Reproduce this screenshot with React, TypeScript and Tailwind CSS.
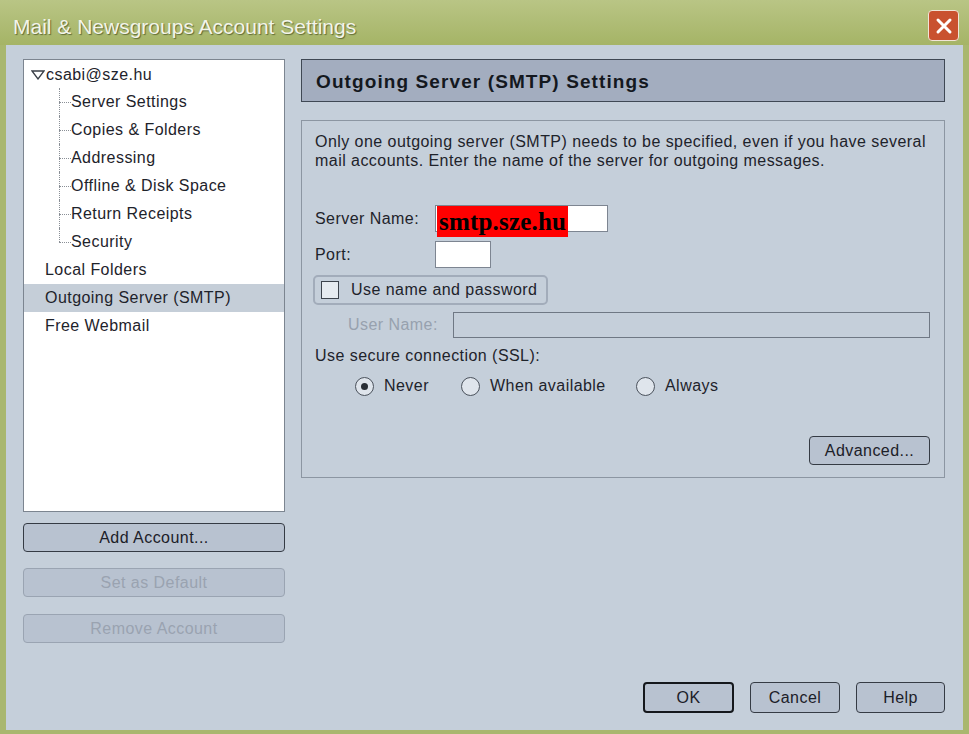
import React from 'react';

const ui = { fontFamily: '"Liberation Sans", Arial, sans-serif' };

const treeChildren = [
  'Server Settings',
  'Copies & Folders',
  'Addressing',
  'Offline & Disk Space',
  'Return Receipts',
  'Security',
];

function TreeChild({ label, last }: { label: string; last: boolean }) {
  return (
    <div className="flex h-[28px] items-center">
      <div className="relative ml-[35px] w-[12px] self-stretch">
        <div
          className={`absolute left-0 top-0 border-l border-dotted border-[#8a8f96] ${
            last ? 'h-1/2' : 'h-full'
          }`}
        />
        <div className="absolute left-0 top-1/2 w-full border-t border-dotted border-[#8a8f96]" />
      </div>
      <span>{label}</span>
    </div>
  );
}

function WinButton({
  children,
  className = '',
  disabled = false,
  isDefault = false,
}: {
  children: React.ReactNode;
  className?: string;
  disabled?: boolean;
  isDefault?: boolean;
}) {
  return (
    <div
      className={`flex items-center justify-center rounded-[4px] bg-[#b8c2d0] text-[16px] ${
        disabled
          ? 'border border-[#9aa4b2] text-[#9aa3b0]'
          : isDefault
            ? 'border-2 border-[#15181c] text-[#1c2028]'
            : 'border border-[#353b44] text-[#1c2028]'
      } ${className}`}
    >
      {children}
    </div>
  );
}

function Radio({ label, checked, className = '' }: { label: string; checked?: boolean; className?: string }) {
  return (
    <div className={`flex items-center ${className}`}>
      <div className="flex h-[19px] w-[19px] items-center justify-center rounded-full border border-[#4b525c] bg-[#dfe5ec]">
        {checked && <div className="h-[7px] w-[7px] rounded-full bg-[#2a2f36]" />}
      </div>
      <span className="ml-[10px]">{label}</span>
    </div>
  );
}

export default function App() {
  return (
    <div className="flex h-[734px] w-[969px] flex-col bg-[#a9b76f]" style={ui}>
      {/* title bar */}
      <div className="flex h-[45px] items-center justify-between bg-gradient-to-b from-[#b9c585] to-[#a5b466] pl-[13px] pr-[10px] pt-[6px]">
        <span className="pt-[3px] text-[21px] text-[#f3f4ea] [text-shadow:1px_1px_1px_#5f6b35]">
          Mail &amp; Newsgroups Account Settings
        </span>
        <div className="flex h-[31px] w-[31px] items-center justify-center rounded-[4px] border border-[#f1e4d6] bg-[#c9512f]">
          <svg width="18" height="18" viewBox="0 0 18 18">
            <path d="M3 3 L15 15 M15 3 L3 15" stroke="#fff" strokeWidth="3" strokeLinecap="round" />
          </svg>
        </div>
      </div>

      {/* body */}
      <div className="mb-[4px] ml-[6px] mr-[6px] flex flex-1 flex-col bg-[#c5cfda] pl-[17px] pr-[18px] pt-[14px] text-[16px] tracking-[0.45px] text-[#1e232b]">
        <div className="flex">
          {/* left column */}
          <div className="flex w-[262px] flex-col">
            <div className="h-[453px] border border-[#7c8590] bg-white">
              <div className="flex h-[28px] items-center pt-[1px]">
                <svg className="ml-[7px] mr-[1px]" width="14" height="10" viewBox="0 0 14 10">
                  <path d="M1 1 H13 L7 9 Z" fill="none" stroke="#3a3f47" strokeWidth="1.3" />
                </svg>
                <span>csabi@sze.hu</span>
              </div>
              {treeChildren.map((c, i) => (
                <TreeChild key={c} label={c} last={i === treeChildren.length - 1} />
              ))}
              <div className="flex h-[28px] items-center pl-[21px]">Local Folders</div>
              <div className="flex h-[28px] items-center bg-[#c5ced8] pl-[21px]">Outgoing Server (SMTP)</div>
              <div className="flex h-[28px] items-center pl-[21px]">Free Webmail</div>
            </div>
            <WinButton className="mt-[11px] h-[29px]">Add Account...</WinButton>
            <WinButton className="mt-[16px] h-[29px]" disabled>
              Set as Default
            </WinButton>
            <WinButton className="mt-[17px] h-[29px]" disabled>
              Remove Account
            </WinButton>
          </div>

          {/* right column */}
          <div className="ml-[16px] flex flex-1 flex-col">
            <div className="flex h-[43px] items-center border border-[#3f4854] bg-[#a3adbf] pl-[14px] pt-[3px] text-[19px] font-bold tracking-[1.1px] text-[#14181e]">
              Outgoing Server (SMTP) Settings
            </div>
            <div className="mt-[18px] flex h-[358px] flex-col border border-[#8c96a2] pl-[13px] pr-[14px] pt-[11px]">
              <p className="leading-[19px]">
                Only one outgoing server (SMTP) needs to be specified, even if you have several mail accounts. Enter the name of the server for outgoing messages.
              </p>

              <div className="mt-[35px] flex h-[27px] items-center">
                <span className="w-[120px]">Server Name:</span>
                <div className="relative h-[27px] w-[173px] border border-[#7d8591] bg-white">
                  <span
                    className="absolute left-[1px] top-[0px] bg-[#ff0000] px-[2px] text-[25px] font-bold leading-[31px] tracking-[0.2px] text-black"
                    style={{ fontFamily: '"Liberation Serif", "Times New Roman", serif' }}
                  >
                    smtp.sze.hu
                  </span>
                </div>
              </div>

              <div className="mt-[9px] flex h-[27px] items-center">
                <span className="w-[120px]">Port:</span>
                <div className="h-[27px] w-[56px] border border-[#7d8591] bg-white" />
              </div>

              <div className="-ml-[2px] mt-[7px] flex h-[30px] w-[235px] items-center rounded-[5px] border-2 border-[#a2acba] pl-[6px]">
                <div className="h-[18px] w-[18px] border border-[#3d434c] bg-[#e6ebf0]" />
                <span className="ml-[12px]">Use name and password</span>
              </div>

              <div className="mt-[7px] flex h-[26px] items-center">
                <span className="ml-[33px] w-[105px] text-[#97a1ae]">User Name:</span>
                <div className="h-[26px] flex-1 border border-[#6f7884] bg-[#c5cfda]" />
              </div>

              <div className="mt-[5px] flex h-[26px] items-center">Use secure connection (SSL):</div>

              <div className="mt-[4px] flex h-[26px] items-center pl-[40px]">
                <Radio label="Never" checked className="w-[106px]" />
                <Radio label="When available" className="w-[175px]" />
                <Radio label="Always" />
              </div>

              <div className="mt-[37px] flex justify-end">
                <WinButton className="h-[29px] w-[121px]">Advanced...</WinButton>
              </div>
            </div>
          </div>
        </div>

        <div className="flex-1" />

        <div className="mb-[17px] flex justify-end gap-[16px]">
          <WinButton className="h-[31px] w-[91px]" isDefault>
            OK
          </WinButton>
          <WinButton className="h-[31px] w-[90px]">Cancel</WinButton>
          <WinButton className="h-[31px] w-[89px]">Help</WinButton>
        </div>
      </div>
    </div>
  );
}
